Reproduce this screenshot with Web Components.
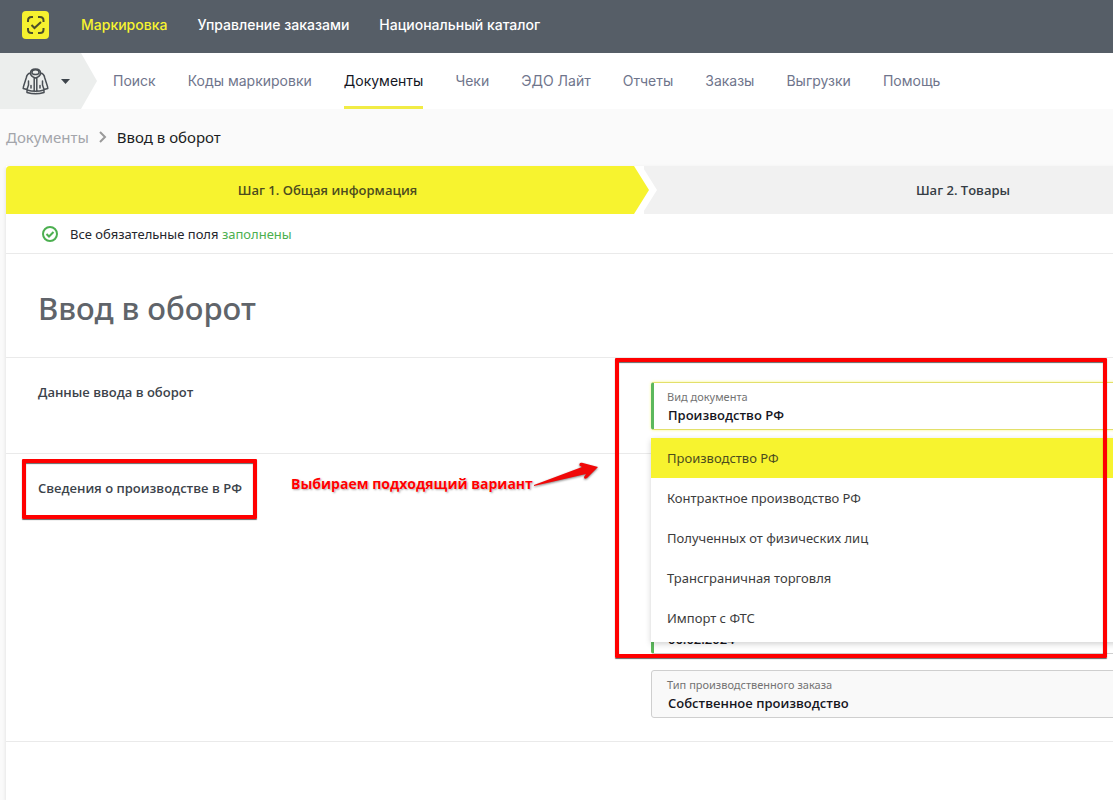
<!DOCTYPE html>
<html lang="ru">
<head>
<meta charset="utf-8">
<title>Ввод в оборот</title>
<style>
html{background:#fafafa}
body{margin:0;min-height:100vh;font:14px/20px "Noto Sans","Open Sans",sans-serif;color:#333a42}
</style>
</head>
<body>
<app-page></app-page>
<script>
const define=(name,html,setup)=>{
  const t=document.createElement('template');t.innerHTML=html;
  customElements.define(name,class extends HTMLElement{
    constructor(){super();this.attachShadow({mode:'open'}).append(t.content.cloneNode(true));}
    connectedCallback(){if(setup)setup(this,this.shadowRoot);}
  });
};

define('top-bar',`<style>
:host{display:flex;align-items:center;height:53px;padding:0 22px;background:#565e67;font:500 14px/20px Inter,sans-serif;box-sizing:border-box}
.logo{display:flex;margin:0 32px 3px 0}
nav{display:flex;gap:30px;padding-bottom:4px}
a{color:#fff;text-decoration:none;white-space:nowrap}
a.on{color:#f8f42f}
</style>
<a class="logo" href="#" aria-label="Главная"><svg width="27" height="28" viewBox="0 0 27 28"><rect width="27" height="28" rx="4" fill="#f6f12f"/><g fill="none" stroke="#4c4f2a" stroke-width="2"><path d="M6 11V9.500Q6 6 9.500 6H11M16 6h2q3.500 0 3.500 3.500V11M21.500 17v1.500Q21.500 22 18 22H16M11 22H9.500Q6 22 6 18.500V17"/><path d="M9.500 14l3 3 6.500-6"/></g></svg></a>
<nav><a class="on" href="#">Маркировка</a><a href="#">Управление заказами</a><a href="#">Национальный каталог</a></nav>`);

define('product-switch',`<style>
:host{display:block;flex:none}
button{display:flex;align-items:center;gap:12px;width:97px;height:56px;border:0;padding:0 0 0 22px;background:#eceeed;clip-path:polygon(0 0,81px 0,100% 50%,81px 100%,0 100%)}
</style>
<button aria-label="Товарная группа"><svg width="27" height="27" viewBox="0 0 27 27" fill="none" stroke="#4a4f55" stroke-width="1.500" stroke-linejoin="round" stroke-linecap="round"><ellipse cx="13.500" cy="4.200" rx="3.600" ry="2.400"/><path d="M8.500 5Q8.500 1 13.500 1T18.500 5Q18.500 8.500 13.500 10 8.500 8.500 8.500 5ZM8.500 5Q5 5.500 4.200 10L1.500 18.500 1.200 20.500 5 21.500M18.500 5Q22 5.500 22.800 10L25.500 18.500 25.800 20.500 22 21.500M6.500 13V17L5 21.500V24.500Q13.500 27 22 24.500V21.500L20.500 17V13M5 22Q13.500 24.500 22 22M12.200 10V23.500M14.800 10V23.500M9 17.500V20M18 17.500V20"/></svg><svg width="9" height="5" viewBox="0 0 9 5"><path d="M0 0h9L4.500 5z" fill="#3d444b"/></svg></button>`);

define('main-nav',`<style>
:host{display:flex;background:#fff;height:56px;font:14px/20px Inter,sans-serif}
nav{display:flex;gap:32px;padding-left:16px}
a{display:flex;align-items:center;border-bottom:3px solid transparent;border-top:3px solid transparent;color:#6f758c;text-decoration:none;white-space:nowrap}
a.on{color:#14161f;border-bottom-color:#f1ec45}
</style>
<product-switch></product-switch>
<nav><a href="#">Поиск</a><a href="#">Коды маркировки</a><a class="on" href="#">Документы</a><a href="#">Чеки</a><a href="#">ЭДО Лайт</a><a href="#">Отчеты</a><a href="#">Заказы</a><a href="#">Выгрузки</a><a href="#">Помощь</a></nav>`);

define('bread-crumbs',`<style>
:host{display:flex;align-items:center;gap:10px;box-sizing:border-box;height:57px;padding:0 0 2px 6px;color:#1b1d22;font-size:15px}
a{color:#a3a5ab;text-decoration:none}
</style>
<a href="#">Документы</a><svg width="8" height="12" viewBox="0 0 8 12"><path d="M1 1l5 5-5 5" fill="none" stroke="#9a9a9a" stroke-width="2"/></svg><span>Ввод в оборот</span>`);

define('step-tabs',`<style>
:host{display:grid;grid-template-columns:1fr 1fr;height:48px;font:600 13px/20px "Open Sans","Noto Sans",sans-serif}
.first{position:relative;z-index:1;margin-right:-13px;padding-right:8px;background:#fff;display:flex}
.first,button.now{clip-path:polygon(0 0,calc(100% - 15px) 0,100% 50%,calc(100% - 15px) 100%,0 100%)}
button{flex:1;border:0;padding:0;font:inherit;color:#363d45;background:#f1f1f1}
button.now{background:#f7f32f;color:#4c4c1e;border-radius:4px 0 0 0}
</style>
<div class="first"><button class="now">Шаг 1. Общая информация</button></div><button>Шаг 2. Товары</button>`);

define('status-line',`<style>
:host{display:flex;align-items:center;gap:12px;height:39px;padding:0 36px;border-bottom:1px solid #eaeaea;font-size:13px;color:#24262c}
em{font-style:normal;color:#4caf50}
</style>
<svg width="16" height="16" viewBox="0 0 16 16" fill="none" stroke="#4caf50" stroke-width="2"><circle cx="8" cy="8" r="7"/><path d="M4.500 8l2.500 2.500 4.500-4.500"/></svg><span><slot></slot> <em><slot name="state"></slot></em></span>`);

define('form-section',`<style>
:host{display:grid;grid-template-columns:1fr 1fr;padding:24px 0;border-top:1px solid #eaeaea;margin-top:-1px}
h2{margin:0;padding-left:32px;font:600 13px/20px "Open Sans","Noto Sans",sans-serif;color:#3c434b}
.fields{display:flex;flex-direction:column;justify-content:flex-end;gap:16px;padding:0 31px 0 7px;position:relative}
</style>
<h2><slot name="title"></slot></h2><div class="fields"><slot></slot></div>`);

define('form-field',`<style>
:host{display:flex;flex-direction:column;box-sizing:border-box;height:48px;padding:6px 15px;border:1px solid #cfcfcf;border-radius:3px;background:#f9f9f9}
:host([valid]){background:#fff;border-left:3px solid #5cb85c;padding-left:13px}
:host([open]){border-color:#e3e06a;border-left-color:#5cb85c;box-shadow:0 0 3px rgba(247,243,47,.6)}
label{min-height:16px;font-size:11px;line-height:16px;color:#737373}
input,select{appearance:none;border:0;outline:0;margin:0;padding:0 0 0 1px;background:none;font:600 13px/20px "Open Sans","Noto Sans",sans-serif;color:#16161e;height:20px;width:100%}
</style>
<label for="c"></label>`,(el,root)=>{
  if(root.querySelector('#c'))return;
  root.querySelector('label').textContent=el.getAttribute('label');
  const c=document.createElement(el.hasAttribute('select')?'select':'input');c.id='c';
  if(!el.getAttribute('label'))c.setAttribute('aria-label','Дата');
  if(c.localName==='select')c.add(new Option(el.getAttribute('value')));else c.value=el.getAttribute('value');
  root.append(c);
});

define('option-list',`<style>
:host{position:absolute;z-index:2;top:56px;left:7px;right:31px;background:#fff;box-shadow:0 2px 6px rgba(0,0,0,.18);padding-bottom:4px}
</style><div role="listbox" aria-label="Вид документа"><slot></slot></div>`);

define('option-item',`<style>
:host{display:block}
button{display:block;width:100%;height:40px;border:0;padding:0 16px;text-align:left;background:none;font:13px/20px "Noto Sans",sans-serif;color:#3c3c3c}
:host([active]) button{background:#f7f32f;color:#4c4c1e}
</style><button role="option"><slot></slot></button>`);

define('mark-box',`<style>
:host{position:absolute;z-index:3;box-sizing:border-box;border:4px solid #f00;border-radius:1px;box-shadow:0 1px 1px rgba(0,0,0,.6),inset 0 1px 1px rgba(0,0,0,.6);pointer-events:none}
</style>`);

define('mark-note',`<style>
:host{position:absolute;z-index:3;display:flex;align-items:flex-start;font:700 14px/20px "Open Sans","Noto Sans",sans-serif;color:#f00;white-space:nowrap;pointer-events:none}
span{margin-top:12px;text-shadow:0 0 1px #fff,1px 1px 2px rgba(0,0,0,.35)}
svg{filter:drop-shadow(0 1px 1px rgba(0,0,0,.5))}
</style><span><slot></slot></span><svg width="66" height="26" viewBox="0 0 66 26"><path d="M1 23L49 5 46.500 3.500Q46 0 49 .8L65 5 54 16Q51 18 51 15L53 12 1 24Z" fill="#f00808"/></svg>`);

define('app-page',`<style>
:host{display:block;overflow:hidden}
main{min-width:1276px;width:calc(100% - 12px);margin-left:6px;background:#fff;position:relative;min-height:634px;box-shadow:0 2px 4px rgba(0,0,0,.12)}
h1{margin:0;padding:4px 32px 0;box-sizing:border-box;height:104px;display:flex;align-items:center;font:500 31px/40px "Noto Sans",sans-serif;color:#60646a}
.production{min-height:240px;padding-bottom:23px;border-bottom:1px solid #eaeaea}
.m1{left:609px;top:192px;width:492px;height:300px}
.m2{left:16px;top:293px;width:235px;height:60px}
mark-note{left:285px;top:296px}
</style>
<top-bar></top-bar><main-nav></main-nav><bread-crumbs></bread-crumbs>
<main>
<step-tabs></step-tabs>
<status-line>Все обязательные поля<span slot="state">заполнены</span></status-line>
<h1>Ввод в оборот</h1>
<form-section><span slot="title">Данные ввода в оборот</span>
<form-field select valid open label="Вид документа" value="Производство РФ"></form-field>
<option-list><option-item active>Производство РФ</option-item><option-item>Контрактное производство РФ</option-item><option-item>Полученных от физических лиц</option-item><option-item>Трансграничная торговля</option-item><option-item>Импорт с ФТС</option-item></option-list>
</form-section>
<form-section class="production"><span slot="title">Сведения о производстве в РФ</span>
<form-field valid label="" value="06.02.2024"></form-field>
<form-field label="Тип производственного заказа" value="Собственное производство"></form-field>
</form-section>
<mark-box class="m1"></mark-box><mark-box class="m2"></mark-box>
<mark-note>Выбираем подходящий вариант</mark-note>
</main>`);
</script>
</body>
</html>
